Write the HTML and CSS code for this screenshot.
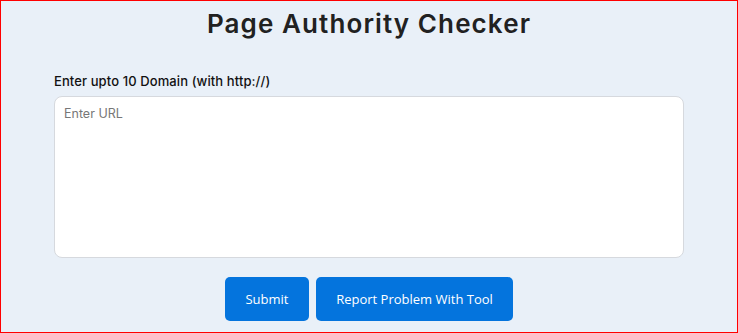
FILE: index.html
```html
<!DOCTYPE html>
<html lang="en">
<head>
<meta charset="utf-8">
<title>Page Authority Checker</title>
<link rel="stylesheet" href="styles.css">
</head>
<body>
<div class="page">
  <h1 class="title">Page Authority Checker</h1>
  <form class="tool">
    <label class="label" for="urls">Enter upto 10 Domain (with http://)</label>
    <textarea id="urls" class="urls" placeholder="Enter URL"></textarea>
    <div class="actions">
      <button type="button" class="btn btn-submit">Submit</button>
      <button type="button" class="btn btn-report">Report Problem With Tool</button>
    </div>
  </form>
</div>
</body>
</html>
```

FILE: styles.css
```css
* { box-sizing: border-box; }
html, body { margin: 0; padding: 0; }
body {
  font-family: "Inter", "Open Sans", sans-serif;
  color: #212121;
}
.page {
  height: 333px;
  border: 1px solid #ff0000;
  background: #e9f0f8;
  padding: 0 53px;
  overflow: hidden;
}
.title {
  margin: 0;
  padding-top: 8px;
  text-align: center;
  font-size: 26px;
  font-weight: 600;
  line-height: 30px;
  letter-spacing: 1.1px;
  color: #212121;
}
.tool {
  display: flex;
  flex-direction: column;
  margin-top: 34px;
}
.label {
  font-size: 13px;
  font-weight: 500;
  line-height: 16px;
  letter-spacing: 0.1px;
  color: #111;
  margin-bottom: 7px;
}
.urls {
  display: block;
  width: 100%;
  height: 162px;
  resize: none;
  border: 1px solid #d6d9de;
  border-radius: 8px;
  background: #fff;
  padding: 8px 9px;
  font-family: "Inter", "Open Sans", sans-serif;
  font-size: 12.5px;
  line-height: 18px;
  color: #333;
}
.urls::placeholder { color: #777; }
.actions {
  display: flex;
  justify-content: center;
  gap: 7px;
  margin-top: 19px;
}
.btn {
  height: 44px;
  border: 0;
  border-radius: 5px;
  background: #0474dd;
  color: #fff;
  font-family: "Open Sans", sans-serif;
  font-size: 13px;
  padding: 0 20px;
}
.btn-submit { width: 84px; }
.btn-report { width: 197px; }
```
